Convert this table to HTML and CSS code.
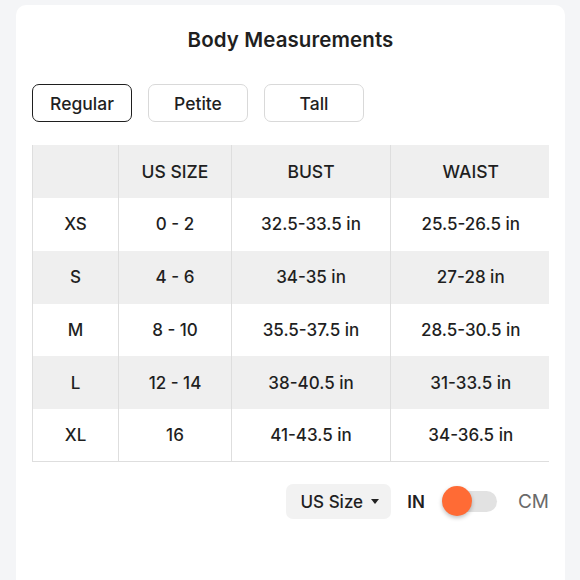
FILE: index.html
```html
<!DOCTYPE html>
<html>
<head>
<meta charset="utf-8">
<link rel="stylesheet" href="styles.css">
</head>
<body>
<div class="card">
  <h1 class="title">Body Measurements</h1>
  <div class="tabs">
    <button class="tab active">Regular</button>
    <button class="tab">Petite</button>
    <button class="tab">Tall</button>
  </div>
  <div class="table-wrap">
    <table class="sizes">
      <colgroup>
        <col class="c1"><col class="c2"><col class="c3"><col class="c4">
      </colgroup>
      <thead>
        <tr><th></th><th>US SIZE</th><th>BUST</th><th>WAIST</th></tr>
      </thead>
      <tbody>
        <tr><td>XS</td><td>0 - 2</td><td>32.5-33.5 in</td><td>25.5-26.5 in</td></tr>
        <tr class="alt"><td>S</td><td>4 - 6</td><td>34-35 in</td><td>27-28 in</td></tr>
        <tr><td>M</td><td>8 - 10</td><td>35.5-37.5 in</td><td>28.5-30.5 in</td></tr>
        <tr class="alt"><td>L</td><td>12 - 14</td><td>38-40.5 in</td><td>31-33.5 in</td></tr>
        <tr><td>XL</td><td>16</td><td>41-43.5 in</td><td>34-36.5 in</td></tr>
      </tbody>
    </table>
  </div>
  <div class="controls">
    <button class="unit-select">US Size <span class="caret"></span></button>
    <span class="unit on">IN</span>
    <span class="toggle"><span class="knob"></span></span>
    <span class="unit off">CM</span>
  </div>
</div>
</body>
</html>
```

FILE: styles.css
```css
* { box-sizing: border-box; }
html, body { margin: 0; padding: 0; }
body {
  background: #f4f5f7;
  font-family: Inter, "Noto Sans", sans-serif;
  color: #1f1f1f;
  height: 580px;
  overflow: hidden;
}
.card {
  background: #fff;
  margin: 5px 15px 0 16px;
  border-radius: 10px;
  height: 600px;
  padding: 23px 16px 0 16px;
}
.title {
  margin: 0;
  text-align: center;
  font-size: 20.5px;
  line-height: 24px;
  font-weight: 600;
  letter-spacing: 0.1px;
}
.tabs {
  display: flex;
  gap: 16px;
  margin-top: 32px;
}
.tab {
  width: 100px;
  height: 38px;
  border: 1px solid #d9d9d9;
  border-radius: 7px;
  background: #fff;
  font-family: inherit;
  font-size: 17.5px;
  font-weight: 500;
  color: #1f1f1f;
  padding: 0;
}
.tab.active {
  border: 1.5px solid #1f1f1f;
}
.table-wrap {
  margin-top: 23px;
  overflow: hidden;
  width: 517px;
}
.sizes {
  border-collapse: collapse;
  table-layout: fixed;
  width: 518px;
  font-size: 17px;
  font-weight: 500;
}
.c1 { width: 86px; }
.c2 { width: 113px; }
.c3 { width: 159px; }
.c4 { width: 160px; }
.sizes th, .sizes td {
  height: 53px;
  text-align: center;
  padding: 0;
  border-left: 1px solid #dedede;
  border-bottom: 1px solid #e6e6e6;
}
.sizes thead th {
  background: #efefef;
  font-weight: 500;
  font-size: 17.5px;
  border-bottom: none;
}
.sizes tr.alt td { background: #efefef; }
.sizes tbody td { height: 52.8px; border-bottom: none; }
.sizes tbody tr:last-child td { border-bottom: 1px solid #dedede; }
.controls {
  display: flex;
  align-items: center;
  justify-content: flex-end;
  margin-top: 22px;
  width: 517px;
}
.unit-select {
  display: flex;
  align-items: center;
  gap: 8px;
  height: 35px;
  width: 105px;
  justify-content: center;
  background: #f2f2f2;
  border: none;
  border-radius: 7px;
  font-family: inherit;
  font-size: 17px;
  font-weight: 500;
  color: #1f1f1f;
  padding: 0 0 0 2px;
}
.caret {
  width: 0; height: 0;
  border-left: 4.5px solid transparent;
  border-right: 4.5px solid transparent;
  border-top: 5px solid #222;
}
.unit {
  font-size: 17px;
  font-weight: 600;
}
.unit.on { margin-left: 16px; color: #1f1f1f; }
.unit.off { margin-left: 21px; color: #6a6a6a; font-weight: 400; font-size: 19px; }
.toggle {
  position: relative;
  margin-left: 17px;
  width: 55px;
  height: 21px;
  border-radius: 11px;
  background: #e2e2e2;
}
.knob {
  position: absolute;
  left: 0;
  top: -5px;
  width: 30px;
  height: 30px;
  border-radius: 50%;
  background: #ff6b35;
  box-shadow: 0 2px 4px rgba(0,0,0,0.25);
}
```
